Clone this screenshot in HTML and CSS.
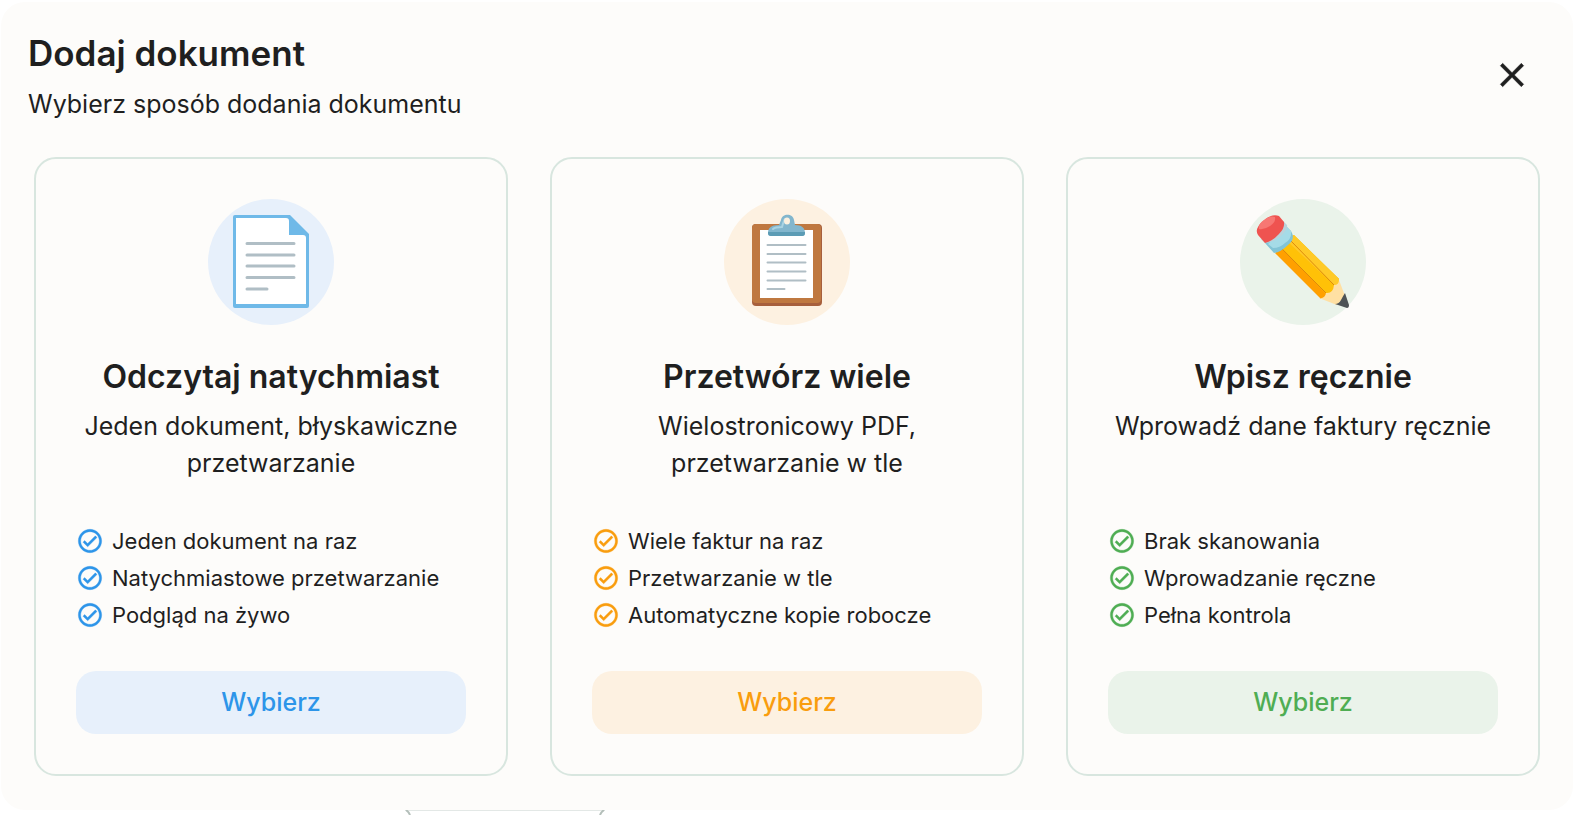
FILE: index.html
```
<!DOCTYPE html>
<html lang="pl">
<head>
    <meta charset="UTF-8">
    <meta name="viewport" content="width=device-width, initial-scale=1.0">
    <title>Dodaj dokument</title>
    <link rel="stylesheet" href="styles.css">
</head>
<body>
    <!-- shared check icon -->
    <svg class="sprite" aria-hidden="true">
        <symbol id="check" viewBox="0 0 24 24">
            <path d="M16.59 7.58 10 14.17l-2.59-2.58L6 13l4 4 8-8zM12 2C6.48 2 2 6.48 2 12s4.48 10 10 10 10-4.48 10-10S17.52 2 12 2zm0 18c-4.42 0-8-3.58-8-8s3.58-8 8-8 8 3.58 8 8-3.58 8-8 8z" fill="currentColor" stroke="currentColor" stroke-width=".3"/>
        </symbol>
    </svg>

    <main class="dialog" role="dialog" aria-labelledby="dialog-title">
        <header class="dialog-header">
            <div>
                <h1 id="dialog-title">Dodaj dokument</h1>
                <p class="subtitle">Wybierz sposób dodania dokumentu</p>
            </div>
            <button class="close" type="button" aria-label="Zamknij">
                <svg viewBox="0 0 24 24"><path d="M19 6.41 17.59 5 12 10.59 6.41 5 5 6.41 10.59 12 5 17.59 6.41 19 12 13.41 17.59 19 19 17.59 13.41 12z" fill="currentColor" stroke="currentColor" stroke-width=".3"/></svg>
            </button>
        </header>

        <div class="cards">
            <section class="card blue">
                <div class="badge">
                    <svg viewBox="0 0 126 126">
                        <path d="M27 16h55l19 19v72a2 2 0 0 1-2 2H27a2 2 0 0 1-2-2V18a2 2 0 0 1 2-2z" fill="#6fb9e8"/>
                        <path d="M28 19h50q3 0 3 3v14h14q3 0 3 3v66H28z" fill="#fff"/>
                        <path d="M39 44.500h47M39 56h47M39 67h47M39 78.500h47M39 90h20" stroke="#b0bec5" stroke-width="3" stroke-linecap="round"/>
                    </svg>
                </div>
                <h2>Odczytaj natychmiast</h2>
                <p class="description">Jeden dokument, błyskawiczne przetwarzanie</p>
                <ul class="features">
                    <li><svg class="check"><use href="#check"/></svg>Jeden dokument na raz</li>
                    <li><svg class="check"><use href="#check"/></svg>Natychmiastowe przetwarzanie</li>
                    <li><svg class="check"><use href="#check"/></svg>Podgląd na żywo</li>
                </ul>
                <button class="select" type="button">Wybierz</button>
            </section>

            <section class="card orange">
                <div class="badge">
                    <svg viewBox="0 0 126 126">
                        <rect x="28" y="25" width="70" height="82" rx="4" fill="#a75f3c"/>
                        <rect x="28" y="25" width="69" height="79" rx="4" fill="#bf7840"/>
                        <path d="M36 31h53v68H36z" fill="#fff"/>
                        <path d="M44 34c0-5 3-8 11-8l2-5c1-7 12-7 13 0l1 5c7 0 10 3 10 8 0 2-1 3-3 3H47q-3 0-3-3z" fill="#82b6cd"/>
                        <path d="M44 33h37v1q0 3-3 3H47q-3 0-3-3z" fill="#5c9cb5"/>
                        <path d="M49 30q2-2 9-2 2-7 3-8" fill="none" stroke="#a9d3e2" stroke-width="2" stroke-linecap="round"/>
                        <ellipse cx="63" cy="22" rx="3" ry="3.500" fill="#fbf0df"/>
                        <path d="M43.500 46h38M43.500 55h38M43.500 63.500h38M43.500 72.500h38M43.500 81.500h38M43.500 90h17" stroke="#b0bec5" stroke-width="2" stroke-linecap="round"/>
                    </svg>
                </div>
                <h2>Przetwórz wiele</h2>
                <p class="description">Wielostronicowy PDF, przetwarzanie w tle</p>
                <ul class="features">
                    <li><svg class="check"><use href="#check"/></svg>Wiele faktur na raz</li>
                    <li><svg class="check"><use href="#check"/></svg>Przetwarzanie w tle</li>
                    <li><svg class="check"><use href="#check"/></svg>Automatyczne kopie robocze</li>
                </ul>
                <button class="select" type="button">Wybierz</button>
            </section>

            <section class="card green">
                <div class="badge">
                    <svg viewBox="0 0 126 126">
                        <path d="M35 54 53 36 99 80v7l-4 8-6 2-8 3z" fill="#ffa000"/>
                        <path d="M42 49 54 36 99 80v6l-5 1-1 7-6 2z" fill="#ffc107"/>
                        <path d="M54 36 99 80v5q-3 2-5 1L48 43z" fill="#ffca28"/>
                        <path d="m42 50 44 44M51 42l43 44" stroke="#dc8a0c" stroke-width="1"/>
                        <path d="M79 99q6 1 7-5 7 1 8-8 5 0 5-5l6 16-8 9z" fill="#ffe0a3"/>
                        <path d="m105 94 4 12q0 3-2 3l-12-4q4 0 6-4t4-7z" fill="#4e5356"/>
                        <path d="M25 44 45 26l6 6q5 8-3 14-7 7-14 8z" fill="#82c4d6"/>
                        <path d="m28 45 19-17 4 4q1 8-6 12-5 5-12 5z" fill="#a5dbe7"/>
                        <path d="M25 44q10-1 17-8 6-6 5-10l-4-4q-1 11-22 18z" fill="#b9d3dc"/>
                        <path d="M18 36q-4-6 5-14 9-8 16-5l5 6q1 6-5 12-6 7-14 9z" fill="#ef5350"/>
                        <path d="M19 30q-1-5 5-9 6-5 11-3 1 5-5 9-6 4-11 3z" fill="#f77773"/>
                    </svg>
                </div>
                <h2>Wpisz ręcznie</h2>
                <p class="description">Wprowadź dane faktury ręcznie</p>
                <ul class="features">
                    <li><svg class="check"><use href="#check"/></svg>Brak skanowania</li>
                    <li><svg class="check"><use href="#check"/></svg>Wprowadzanie ręczne</li>
                    <li><svg class="check"><use href="#check"/></svg>Pełna kontrola</li>
                </ul>
                <button class="select" type="button">Wybierz</button>
            </section>
        </div>
    </main>

    <!-- edge of the page control behind the dialog -->
    <svg class="behind" viewBox="0 0 200 5" aria-hidden="true">
        <path d="M0 .5h200" stroke="#e3e8e6"/>
        <path d="M1 0q3 2 4 5M199 0q-3 2-4 5" fill="none" stroke="#b4bfba" stroke-width="2"/>
    </svg>
</body>
</html>
```
FILE: styles.css
```
* { box-sizing: border-box; }
body {
    margin: 0;
    background: #fff;
    color: #1f1f1f;
    font-family: Inter, "Open Sans", sans-serif;
    font-size: 25px;
    line-height: 37px;
}
h1, h2, p, ul { margin: 0; padding: 0; }
.sprite { position: absolute; width: 0; height: 0; }

.dialog {
    margin: 2px 1px 0;
    padding: 31px 33px 34px;
    background: #fdfcfa;
    border-radius: 24px;
}
.dialog-header {
    display: flex;
    justify-content: space-between;
    align-items: flex-start;
    margin: 0 8px 34px -6px;
}
h1 { font-size: 35px; line-height: 40px; font-weight: 600; margin-bottom: 13px; }
.close {
    width: 40px;
    height: 40px;
    margin-top: 22px;
    padding: 0;
    border: 0;
    background: none;
    color: #1f1f1f;
    cursor: pointer;
}
.close svg { display: block; }

.cards {
    display: grid;
    grid-template-columns: repeat(3, 1fr);
    gap: 42px;
}
.card {
    display: flex;
    flex-direction: column;
    padding: 40px;
    border: 2px solid #d8e6df;
    border-radius: 22px;
    text-align: center;
}
.badge {
    align-self: center;
    width: 126px;
    height: 126px;
    margin-bottom: 32px;
    border-radius: 50%;
    background: var(--tint);
}
.badge svg { display: block; }
h2 { font-size: 32px; line-height: 40px; font-weight: 600; margin-bottom: 11px; }
.features {
    display: flex;
    flex-direction: column;
    gap: 9px;
    margin-top: auto;
    padding-top: 45px;
    list-style: none;
    text-align: left;
    font-size: 22px;
    line-height: 28px;
}
.features li { display: flex; align-items: center; gap: 8px; }
.check { flex: none; width: 28px; height: 28px; color: var(--accent); }
.select {
    height: 63px;
    margin-top: 42px;
    border: 0;
    border-radius: 20px;
    background: var(--tint);
    color: var(--accent);
    font: inherit;
    font-weight: 500;
    cursor: pointer;
}
.behind { display: block; width: 200px; height: 5px; margin-left: 405px; }

.blue { --accent: #2d95e9; --tint: #e7f0fb; }
.orange { --accent: #f99d0e; --tint: #fdf1e1; }
.green { --accent: #4fad53; --tint: #eaf3ea; }
```
